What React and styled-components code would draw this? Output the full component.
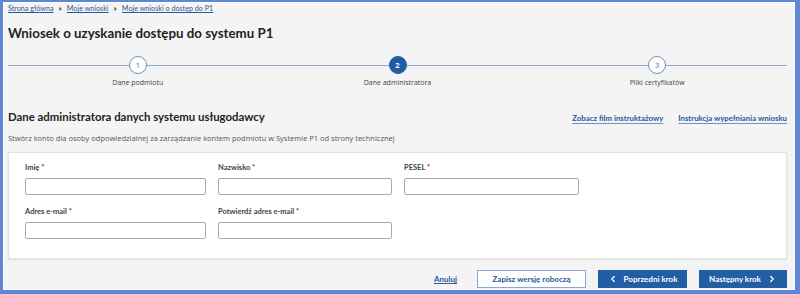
import React from 'react'
import styled, { createGlobalStyle } from 'styled-components'
import { ChevronLeft, ChevronRight } from 'lucide-react'

const GlobalStyle = createGlobalStyle`
  * { box-sizing: border-box; }
  html, body { margin: 0; padding: 0; background: #f4f4f4; }
  body { font-family: "Open Sans", "Liberation Sans", sans-serif; color: #222; }
`

const boldFont = `Lato, "Open Sans", "Liberation Sans", sans-serif`

const steps = [
  { nr: 1, label: 'Dane podmiotu' },
  { nr: 2, label: 'Dane administratora', active: true },
  { nr: 3, label: 'Pliki certyfikatów' },
]

const fields = [
  [{ label: 'Imię' }, { label: 'Nazwisko' }, { label: 'PESEL' }],
  [{ label: 'Adres e-mail' }, { label: 'Potwierdź adres e-mail' }],
]

function App() {
  return (
    <>
      <GlobalStyle />
      <Window>
        <Breadcrumbs>
          <Crumb href="#">Strona główna</Crumb>
          <Sep>»</Sep>
          <Crumb href="#">Moje wnioski</Crumb>
          <Sep>»</Sep>
          <Crumb href="#">Moje wnioski o dostęp do P1</Crumb>
        </Breadcrumbs>

        <Title>Wniosek o uzyskanie dostępu do systemu P1</Title>

        <Stepper>
          {steps.map((s) => (
            <Step key={s.nr}>
              <StepTrack>
                <Line />
                <Circle $active={s.active}>{s.nr}</Circle>
                <Line />
              </StepTrack>
              <StepLabel>{s.label}</StepLabel>
            </Step>
          ))}
        </Stepper>

        <SectionHead>
          <SectionTitle>Dane administratora danych systemu usługodawcy</SectionTitle>
          <Links>
            <HelpLink href="#">Zobacz film instruktażowy</HelpLink>
            <HelpLink href="#">Instrukcja wypełniania wniosku</HelpLink>
          </Links>
        </SectionHead>

        <Description>
          Stwórz konto dla osoby odpowiedzialnej za zarządzanie kontem podmiotu w Systemie P1 od strony technicznej
        </Description>

        <Card>
          {fields.map((row, i) => (
            <FieldRow key={i}>
              {row.map((f) => (
                <Field key={f.label}>
                  <Label>
                    {f.label} <Req>*</Req>
                  </Label>
                  <Input type="text" />
                </Field>
              ))}
            </FieldRow>
          ))}
        </Card>

        <Footer>
          <CancelLink href="#">Anuluj</CancelLink>
          <Button $variant="outline" $w={109}>Zapisz wersję roboczą</Button>
          <Button $w={89}>
            <ChevronLeft size={10} strokeWidth={3} />
            Poprzedni krok
          </Button>
          <Button $w={88}>
            Następny krok
            <ChevronRight size={10} strokeWidth={3} />
          </Button>
        </Footer>
      </Window>
    </>
  )
}

const Window = styled.div`
  width: 800px;
  height: 294px;
  display: flex;
  flex-direction: column;
  background: #f4f4f4;
  border-style: solid;
  border-color: #6087d6;
  border-width: 2px 5px 4px 3px;
  box-shadow: inset 0 0 0 1px #ffffff;
  padding: 1px 8px 0 5px;
`

const Breadcrumbs = styled.div`
  display: flex;
  align-items: center;
  gap: 5px;
  font-family: ${boldFont};
  font-size: 7.2px;
  line-height: 11px;
`

const Crumb = styled.a`
  color: #2b5797;
  text-decoration: underline;
`

const Sep = styled.span`
  color: #333;
  font-weight: 700;
`

const Title = styled.h1`
  margin: 10px 0 0;
  font-family: ${boldFont};
  font-size: 13.3px;
  line-height: 18px;
  font-weight: 700;
  color: #222;
`

const Stepper = styled.div`
  display: grid;
  grid-template-columns: repeat(3, 1fr);
  margin-top: 14px;
`

const Step = styled.div`
  display: flex;
  flex-direction: column;
  align-items: center;
`

const StepTrack = styled.div`
  display: flex;
  align-items: center;
  width: 100%;
`

const Line = styled.div`
  flex: 1;
  height: 1px;
  background: #8fa9c9;
`

const Circle = styled.div`
  width: 18px;
  height: 18px;
  border-radius: 50%;
  display: flex;
  align-items: center;
  justify-content: center;
  font-size: 7.5px;
  background: ${(p) => (p.$active ? '#1f5ca3' : '#ffffff')};
  color: ${(p) => (p.$active ? '#ffffff' : '#666')};
  border: 1.5px solid ${(p) => (p.$active ? '#1f5ca3' : '#6f92c0')};
  font-weight: ${(p) => (p.$active ? 700 : 400)};
`

const StepLabel = styled.div`
  margin-top: 3px;
  font-size: 7px;
  line-height: 11px;
  color: #444;
`

const SectionHead = styled.div`
  display: flex;
  align-items: baseline;
  justify-content: space-between;
  margin-top: 21px;
`

const SectionTitle = styled.h2`
  margin: 0;
  font-family: ${boldFont};
  font-size: 11.4px;
  line-height: 16px;
  font-weight: 700;
  color: #222;
`

const Links = styled.div`
  display: flex;
  gap: 15px;
`

const HelpLink = styled.a`
  font-family: ${boldFont};
  font-size: 7.8px;
  font-weight: 700;
  color: #2b5797;
  text-decoration: underline;
  text-decoration-color: #6f92c0;
  text-underline-offset: 2px;
`

const Description = styled.p`
  margin: 8px 0 0;
  font-size: 7.5px;
  line-height: 11px;
  color: #555;
`

const Card = styled.div`
  margin-top: 8px;
  height: 107px;
  background: #ffffff;
  border: 1px solid #e3e3e3;
  box-shadow: 0 1px 2px rgba(0, 0, 0, 0.08);
  padding: 10px 16px 0;
  display: flex;
  flex-direction: column;
  gap: 12px;
`

const FieldRow = styled.div`
  display: grid;
  grid-template-columns: 181px 174px 175px;
  column-gap: 12px;
`

const Field = styled.div`
  display: flex;
  flex-direction: column;
`

const Label = styled.label`
  font-family: ${boldFont};
  font-size: 7.5px;
  line-height: 10px;
  font-weight: 700;
  color: #444;
  margin-bottom: 5px;
`

const Req = styled.span`
  color: #d0021b;
`

const Input = styled.input`
  height: 17px;
  width: 100%;
  border: 1px solid #a9a9a9;
  border-radius: 2px;
  background: #fff;
  outline: none;
`

const Footer = styled.div`
  display: flex;
  justify-content: flex-end;
  align-items: center;
  margin-top: 11px;
  gap: 12px;
`

const CancelLink = styled.a`
  margin-right: 8px;
  font-family: ${boldFont};
  font-size: 8px;
  font-weight: 700;
  color: #2b5797;
  text-decoration: underline;
`

const Button = styled.button`
  width: ${(p) => p.$w}px;
  height: 18px;
  padding: 0;
  display: flex;
  align-items: center;
  justify-content: center;
  gap: 6px;
  font-family: ${boldFont};
  font-size: 8px;
  font-weight: 700;
  border-radius: 0;
  cursor: pointer;
  background: ${(p) => (p.$variant === 'outline' ? '#ffffff' : '#215ea4')};
  color: ${(p) => (p.$variant === 'outline' ? '#2b5797' : '#ffffff')};
  border: 1px solid ${(p) => (p.$variant === 'outline' ? '#8aa8d0' : '#215ea4')};
`

export default App
